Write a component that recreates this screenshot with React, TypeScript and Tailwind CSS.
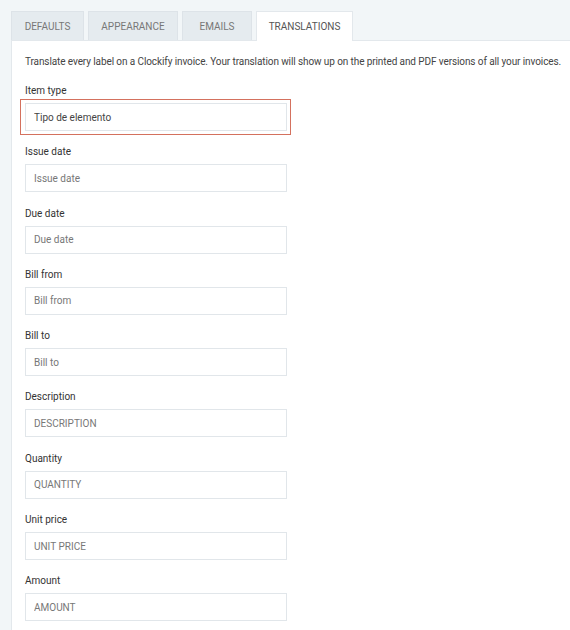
import React from "react";

type Field = {
  label: string;
  placeholder: string;
  value?: string;
  highlighted?: boolean;
};

const tabs = ["Defaults", "Appearance", "Emails", "Translations"];

const fields: Field[] = [
  { label: "Item type", placeholder: "Item type", value: "Tipo de elemento", highlighted: true },
  { label: "Issue date", placeholder: "Issue date" },
  { label: "Due date", placeholder: "Due date" },
  { label: "Bill from", placeholder: "Bill from" },
  { label: "Bill to", placeholder: "Bill to" },
  { label: "Description", placeholder: "DESCRIPTION" },
  { label: "Quantity", placeholder: "QUANTITY" },
  { label: "Unit price", placeholder: "UNIT PRICE" },
  { label: "Amount", placeholder: "AMOUNT" },
];

const App: React.FC = () => {
  const active = "Translations";

  return (
    <div
      className="min-h-[630px] w-[570px] overflow-hidden bg-[#f2f6f8] pt-[11px] pl-[11px]"
      style={{ fontFamily: "Roboto, 'Liberation Sans', sans-serif" }}
    >
      {/* tabs */}
      <div className="flex items-end gap-[4px]">
        {tabs.map((tab) => (
          <div
            key={tab}
            className={`flex h-[29px] items-center justify-center border border-b-0 text-[10px] uppercase ${
              tab === active
                ? "relative z-10 -mb-px h-[30px] w-[97px] border-[#e3e8ec] bg-white text-[#555]"
                : "border-[#dde3e8] bg-[#e5ebef] text-[#777] " +
                  (tab === "Defaults" ? "w-[73px]" : tab === "Appearance" ? "w-[90px]" : "w-[70px]")
            }`}
          >
            {tab}
          </div>
        ))}
      </div>

      {/* panel */}
      <div className="border-t border-l border-[#e3e8ec] bg-white pl-[13px] pt-[14px] pb-[20px]">
        <p className="whitespace-nowrap text-[10px] leading-[14px] tracking-[-0.1px] text-[#444]">
          Translate every label on a Clockify invoice. Your translation will show up on the printed and PDF versions of all your invoices.
        </p>

        <div className="mt-[15px] flex flex-col">
          {fields.map((f) => (
            <div key={f.label} className="mb-[14.3px] flex flex-col">
              <label className="text-[10px] leading-[14px] text-[#333]">{f.label}</label>
              <div className="relative mt-[5px] w-[262px]">
                {f.highlighted && (
                  <div className="pointer-events-none absolute -top-[4px] -bottom-[4px] -left-[5px] -right-[4px] border border-[#d4715e]" />
                )}
                <input
                  type="text"
                  readOnly
                  value={f.value ?? ""}
                  placeholder={f.placeholder}
                  className="h-[28px] w-full border border-[#e1e6ea] bg-white px-[8px] text-[10px] text-[#444] placeholder:text-[#777] outline-none"
                  style={{ fontFamily: "Roboto, 'Liberation Sans', sans-serif" }}
                />
              </div>
            </div>
          ))}
        </div>
      </div>
    </div>
  );
};

export default App;
